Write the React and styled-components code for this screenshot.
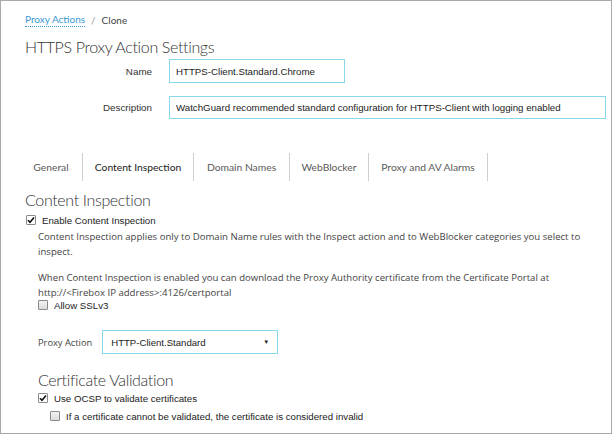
import React from "react";
import styled, { createGlobalStyle } from "styled-components";

const Global = createGlobalStyle`
  html, body { margin: 0; padding: 0; background: #fff; }
  body { width: 612px; height: 434px; overflow: hidden; }
  * { box-sizing: border-box; }
`;

const Frame = styled.div`
  width: 612px;
  height: 434px;
  border: 1px solid #a9a9a9;
  padding: 11px 0 0 24px;
  font-family: "Liberation Sans", Arial, sans-serif;
  color: #333;
`;

const Breadcrumb = styled.div`
  display: flex;
  align-items: center;
  gap: 6px;
  font-family: Lato, "Open Sans", sans-serif;
  font-size: 10px;
  line-height: 16px;
  color: #444;
`;

const CrumbLink = styled.span`
  color: #3a9ad4;
  border-bottom: 1px dotted #3a9ad4;
  line-height: 13px;
`;

const Sep = styled.span`
  color: #999;
`;

const Heading = styled.h2`
  margin: ${(p) => p.$mt || 0}px 0 0 ${(p) => p.$ml || 0}px;
  font-family: Lato, sans-serif;
  font-weight: 300;
  font-size: 16px;
  line-height: 20px;
  color: #333;
  letter-spacing: -0.35px;
`;

const FormGrid = styled.div`
  display: grid;
  grid-template-columns: 127px auto;
  column-gap: 17px;
  row-gap: 13px;
  margin-top: 2px;
  align-items: center;
`;

const Label = styled.label`
  text-align: right;
  font-size: 9.8px;
  color: #333;
`;

const TextBox = styled.div`
  width: ${(p) => p.$w}px;
  height: ${(p) => p.$h || 24}px;
  border: 1px solid #8ad6ea;
  padding: 0 6px;
  display: flex;
  align-items: center;
  font-size: 9.7px;
  color: #222;
  white-space: nowrap;
`;

const Tabs = styled.div`
  display: flex;
  margin-top: 34px;
  margin-left: -5px;
  height: 28px;
`;

const Tab = styled.div`
  width: ${(p) => p.$w}px;
  display: flex;
  align-items: center;
  justify-content: center;
  border-right: 1px solid #cfcfcf;
  font-family: Lato, sans-serif;
  font-size: 10.3px;
  color: ${(p) => (p.$active ? "#222" : "#5a5a5a")};
`;

const CheckRow = styled.div`
  display: flex;
  align-items: center;
  gap: 6px;
  height: 14px;
  margin: ${(p) => p.$mt || 0}px 0 0 ${(p) => p.$ml || 0}px;
  font-size: 9.7px;
  color: #222;
`;

const Box = styled.span`
  width: 10px;
  height: 10px;
  border: 1px solid #8a8a8a;
  border-radius: 1px;
  background: ${(p) => (p.$checked ? "#fff" : "linear-gradient(#f2f2f2, #dcdcdc)")};
  display: flex;
  align-items: center;
  justify-content: center;
`;

const Para = styled.p`
  margin: ${(p) => p.$mt || 0}px 0 0 13px;
  width: 560px;
  font-family: "Open Sans", sans-serif;
  font-size: 9.6px;
  line-height: 15px;
  color: #444;
`;

const SelectRow = styled.div`
  display: flex;
  align-items: center;
  gap: 10px;
  margin: 18px 0 0 13px;
`;

const SelectLabel = styled.span`
  font-family: "Open Sans", sans-serif;
  font-size: 9.3px;
  color: #444;
`;

const Select = styled.div`
  width: 176px;
  height: 24px;
  border: 1px solid #8ad6ea;
  padding: 0 8px 0 8px;
  display: flex;
  align-items: center;
  justify-content: space-between;
  font-size: 9.6px;
  color: #222;
`;

const Caret = styled.span`
  font-size: 6px;
  color: #222;
`;

function Check({ checked, children, mt, ml }) {
  return (
    <CheckRow $mt={mt} $ml={ml}>
      <Box $checked={checked}>
        {checked && (
          <svg width="8" height="8" viewBox="0 0 8 8">
            <path d="M1 4.2 L3 6.3 L7 1.5" fill="none" stroke="#111" strokeWidth="1.6" />
          </svg>
        )}
      </Box>
      <span>{children}</span>
    </CheckRow>
  );
}

export default function App() {
  return (
    <>
      <Global />
      <Frame>
        <Breadcrumb>
          <CrumbLink>Proxy Actions</CrumbLink>
          <Sep>/</Sep>
          <span>Clone</span>
        </Breadcrumb>
        <Heading $mt={9}>HTTPS Proxy Action Settings</Heading>
        <FormGrid>
          <Label>Name</Label>
          <TextBox $w={176}>HTTPS-Client.Standard.Chrome</TextBox>
          <Label>Description</Label>
          <TextBox $w={437} $h={23}>
            WatchGuard recommended standard configuration for HTTPS-Client with logging enabled
          </TextBox>
        </FormGrid>
        <Tabs>
          <Tab $w={63}>General</Tab>
          <Tab $w={111} $active>Content Inspection</Tab>
          <Tab $w={96}>Domain Names</Tab>
          <Tab $w={79}>WebBlocker</Tab>
          <Tab $w={119}>Proxy and AV Alarms</Tab>
        </Tabs>
        <Heading $mt={9}>Content Inspection</Heading>
        <Check checked ml={1} mt={3}>Enable Content Inspection</Check>
        <Para $mt={2}>
          Content Inspection applies only to Domain Name rules with the Inspect action and to WebBlocker
          categories you select to inspect.
        </Para>
        <Para $mt={11}>
          When Content Inspection is enabled you can download the Proxy Authority certificate from the
          Certificate Portal at <br />
          http://&lt;Firebox IP address&gt;:4126/certportal
        </Para>
        <Check ml={13} mt={-2}>Allow SSLv3</Check>
        <SelectRow>
          <SelectLabel>Proxy Action</SelectLabel>
          <Select>
            <span>HTTP-Client.Standard</span>
            <Caret>▼</Caret>
          </Select>
        </SelectRow>
        <Heading $mt={16} $ml={13}>Certificate Validation</Heading>
        <Check checked ml={13} mt={1}>Use OCSP to validate certificates</Check>
        <Check ml={25} mt={4}>If a certificate cannot be validated, the certificate is considered invalid</Check>
      </Frame>
    </>
  );
}
